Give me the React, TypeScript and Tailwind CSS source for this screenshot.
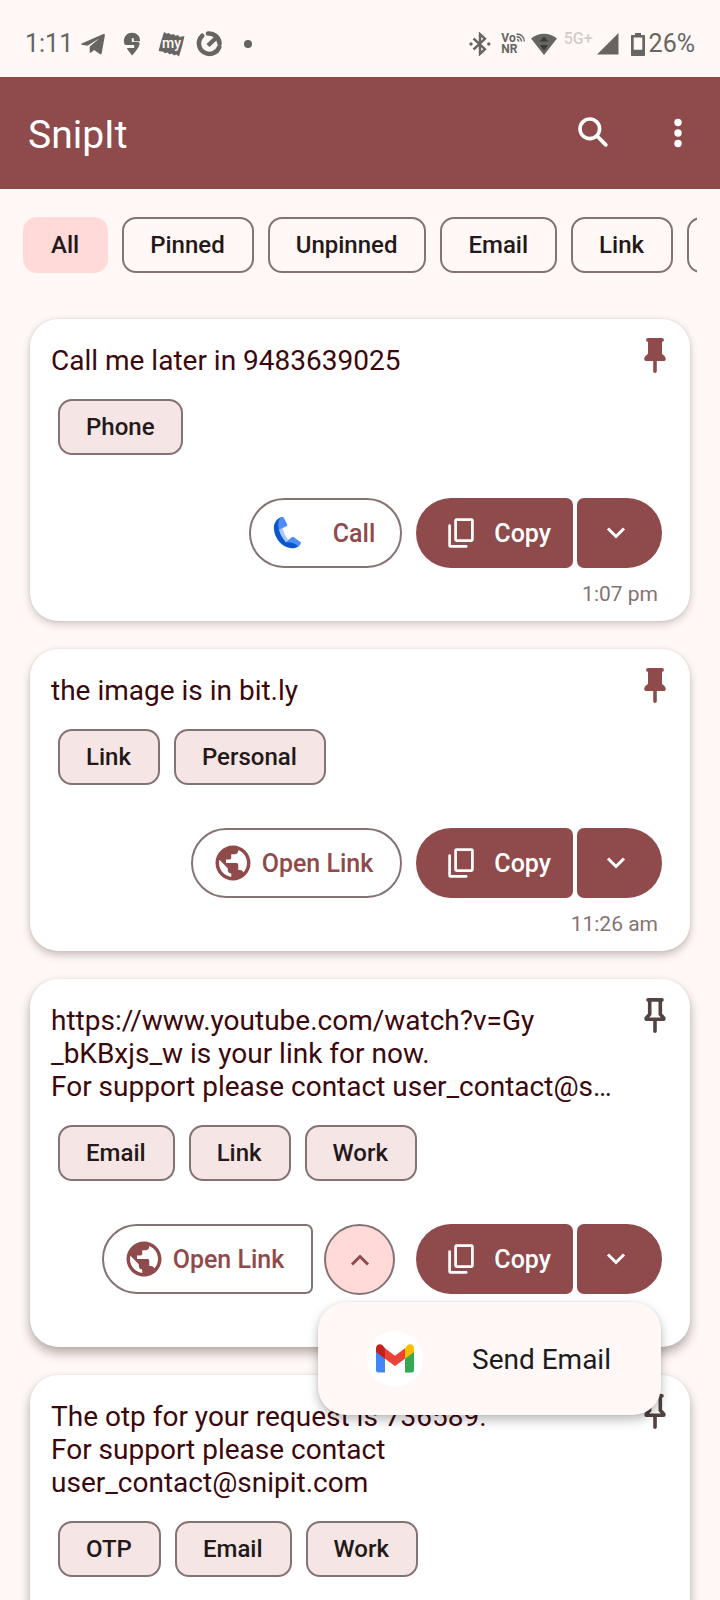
import type { ReactNode } from "react";

type Snippet = {
  text: string[];
  tags: string[];
  pinned: boolean;
  action?: "call" | "link" | "link-menu";
  time?: string;
  shadow: string;
};

const filters = ["All", "Pinned", "Unpinned", "Email", "Link"];

const snippets: Snippet[] = [
  {
    text: ["Call me later in 9483639025"],
    tags: ["Phone"],
    pinned: true,
    action: "call",
    time: "1:07 pm",
    shadow: "shadow-[0_3px_8px_rgba(60,40,35,0.24),0_0_3px_rgba(60,40,35,0.1)]",
  },
  {
    text: ["the image is in bit.ly"],
    tags: ["Link", "Personal"],
    pinned: true,
    action: "link",
    time: "11:26 am",
    shadow: "shadow-[0_4px_9px_rgba(60,40,35,0.28),0_0_3px_rgba(60,40,35,0.08)]",
  },
  {
    text: [
      "https://www.youtube.com/watch?v=Gy",
      "_bKBxjs_w is your link for now.",
      "For support please contact user_contact@s…",
    ],
    tags: ["Email", "Link", "Work"],
    pinned: false,
    action: "link-menu",
    shadow: "shadow-[0_6px_11px_rgba(50,35,30,0.36),0_0_3px_rgba(60,40,35,0.06)]",
  },
  {
    text: [
      "The otp for your request is 736589.",
      "For support please contact",
      "user_contact@snipit.com",
    ],
    tags: ["OTP", "Email", "Work"],
    pinned: false,
    shadow: "shadow-[0_6px_11px_rgba(50,35,30,0.36),0_0_3px_rgba(60,40,35,0.06)]",
  },
];

function StatusBar() {
  return (
    <div className="flex h-[77px] shrink-0 items-center justify-between pt-[11px] pr-[25px] pl-[25px] text-[25px] leading-7 text-[#676562]">
      <div className="flex items-center">
        <span>1:11</span>
        <svg className="ml-2 h-6 w-6" viewBox="0 0 24 24" fill="currentColor" aria-hidden="true">
          <path d="M.6 11.6 22.4 2.1c.9-.4 1.7.3 1.5 1.2l-3.2 18c-.2 1.1-1 1.4-1.9.8l-5.700-4.1-2.900 2.400c-.8.6-1.5.3-1.5-.7v-5.200l9.700-8.300L6.500 13.800.7 12.700c-.7-.2-.7-.8-.1-1.1Z" />
        </svg>
        <svg className="ml-[18px] h-6 w-[18px]" viewBox="0 0 18 24" aria-hidden="true">
          <path
            fill="currentColor"
            d="M9 .8c4.600 0 8 3.200 8 7.700v.8h-6.200V6.300H8.800v3.600h6c1.600 0 2.100 1 1.700 2.600-1 3.900-4.200 7.400-7.400 10.900-2-2.400-3.900-4.700-5.300-7.300h7.400v-3.000H3C1.500 12.900.9 11 .9 9 .9 4.200 4.500.8 9 .8Z"
          />
        </svg>
        <svg className="ml-[17px] h-[26px] w-[27px]" viewBox="0 0 27 26" aria-hidden="true">
          <path
            fill="currentColor"
            d="M6 1l3 1.800 2-.9 2 1.900 2.500-.8 2 1.800 2.400-.7 1.900 1.800L26.500 5 24 15.500l-3 10-2.700-1.900-2.300.9-2-1.900-2.400.8-2-1.800-2.600.7-1.800-1.600L.6 20 3 10.500Z"
          />
          <text x="4" y="17" fontSize="14" fontWeight="500" fill="#fff8f6" fontFamily="Roboto, sans-serif">
            my
          </text>
        </svg>
        <svg className="ml-[10px] h-[28px] w-[28px]" viewBox="0 0 28 28" fill="none" stroke="currentColor" aria-hidden="true">
          <path d="M7.200 5.800A10.500 10.500 0 1 0 24.300 17" strokeWidth="4.600" strokeLinecap="round" />
          <path d="M13 3.500A10.500 10.500 0 0 1 24.500 13.500" strokeWidth="4.600" strokeLinecap="round" />
          <path d="M13 15.500 21 8" strokeWidth="4.400" />
        </svg>
        <span className="ml-[21px] size-2 rounded-full bg-current" />
      </div>
      <div className="flex items-center">
        <svg className="h-6 w-[22px]" viewBox="0 0 22 24" fill="none" stroke="currentColor" strokeWidth="2.400" aria-hidden="true">
          <path d="M4.500 6.500 16 17.200l-5 4.600V2.200l5 4.600L4.500 17.500" />
          <circle cx="2" cy="12" r="1.700" fill="currentColor" stroke="none" />
          <circle cx="19.800" cy="12" r="1.700" fill="currentColor" stroke="none" />
        </svg>
        <div className="ml-[10px] flex flex-col text-[12px] leading-[11px] font-bold">
          <span className="flex">
            Vo
            <svg className="h-[9px] w-[9px]" viewBox="0 0 9 9" fill="none" stroke="currentColor" strokeWidth="1.400" aria-hidden="true">
              <path d="M.5 1C5 1 8.300 4 8.300 8.500M.5 3.800c2.800 0 5 1.900 5 4.700M1 6.500c1 .2 1.700.9 1.800 2" />
            </svg>
          </span>
          <span>NR</span>
        </div>
        <svg className="ml-[6px] h-[23px] w-[26px]" viewBox="0 0 26 23" aria-hidden="true">
          <path fill="currentColor" d="M0 5.500C7.500-1 18.500-1 26 5.500L13 22Z" />
          <path fill="#3d3b39" d="M13 3.500 17.200 8.500H8.800ZM13 17.500 8.800 12h8.400Z" />
        </svg>
        <span className="ml-[7px] pb-[10px] text-[16px] leading-4 font-medium text-[#d3cdca]">5G+</span>
        <svg className="ml-[4px] h-[22px] w-[22px]" viewBox="0 0 22 22" fill="currentColor" aria-hidden="true">
          <path d="M21.500 0v21.500H0Z" />
        </svg>
        <svg className="mr-1 ml-3 h-6 w-[14px]" viewBox="0 0 14 24" aria-hidden="true">
          <path
            fill="currentColor"
            fillRule="evenodd"
            d="M4 1h6v2h3c.6 0 1 .4 1 1v19c0 .6-.4 1-1 1H1c-.6 0-1-.4-1-1V4c0-.6.4-1 1-1h3ZM2.700 5.500v12.300h8.600V5.500Z"
          />
        </svg>
        <span>26%</span>
      </div>
    </div>
  );
}

function PinIcon({ filled }: { filled: boolean }) {
  return (
    <svg className="h-9 w-6" viewBox="0 0 24 36" aria-hidden="true">
      {filled ? (
        <path
          fill="#8f4a4b"
          d="M5 0h14a1.900 1.900 0 0 1 0 3.800V15.700c1 1.400 3.700 2.400 3.700 5.200 0 1.300-.8 2.100-2 2.100H13.800V33.200a1.800 1.800 0 0 1-3.600 0V23H3.300c-1.200 0-2-.8-2-2.100 0-2.800 2.700-3.800 3.700-5.200V3.800A1.900 1.900 0 0 1 5 0Z"
        />
      ) : (
        <g fill="none" stroke="#524343" strokeWidth="3.600" strokeLinecap="round" strokeLinejoin="round">
          <path d="M5 1.900h14M6.700 2v14.200L3.200 20.200V21.200h17.600v-1L17.300 16.200V2M12 22v11.200" />
        </g>
      )}
    </svg>
  );
}

function PhoneIcon() {
  return (
    <svg className="h-8 w-7" viewBox="0 0 28 32" aria-hidden="true">
      <path fill="#0b57d0" d="M7.500.3C3 2.500.7 7 .9 11.500 1.200 21 9 30.500 18.500 31.200c2.500.2 5-.5 7-2L20 22l-7 3L6 12.500 9 5Z" />
      <path fill="#a8c7fa" d="M6 12.500 9.500 11c1 4.500 3 8.700 6 12L13 25.200C9.500 21.500 7 17.300 6 12.500Z" />
      <path fill="#4c8df6" d="M7.300.4C9.300-.3 10.400.1 11.100 1.300L14 7c.5 1 .3 1.700-.6 2.300L6 12.800C4.500 8.500 5 4 7.300.4Z" />
      <path fill="#4c8df6" d="M13 25.300 18.300 20.400c.9-.8 2-.8 2.900 0L27.200 24.800c.8.6.9 1.500.3 2.400-.5.9-1.300 1.700-2.200 2.300C22 26 17.500 24.800 13 25.300Z" />
    </svg>
  );
}

function GlobeIcon() {
  return (
    <svg className="h-[42px] w-[42px]" viewBox="0 0 24 24" fill="#8f4a4b" aria-hidden="true">
      <path d="M12 2C6.480 2 2 6.480 2 12s4.480 10 10 10 10-4.480 10-10S17.520 2 12 2zm-1 17.930c-3.950-.49-7-3.850-7-7.930 0-.62.08-1.210.21-1.790L9 15v1c0 1.100.9 2 2 2v1.930zm6.900-2.540c-.26-.81-1-1.390-1.900-1.390h-1v-3c0-.55-.45-1-1-1H8v-2h2c.55 0 1-.45 1-1V7h2c1.100 0 2-.9 2-2v-.41c2.930 1.190 5 4.060 5 7.410 0 2.080-.8 3.970-2.100 5.390z" />
    </svg>
  );
}

function CopyIcon() {
  return (
    <svg className="h-[30px] w-[26px]" viewBox="0 0 26 30" fill="none" stroke="currentColor" strokeLinecap="round" strokeLinejoin="round" aria-hidden="true">
      <rect x="7.600" y="1.600" width="16.800" height="21" rx="1" strokeWidth="2.700" />
      <path d="M1.600 7.700V27.500c0 .5.300.9.900.9H18.200" strokeWidth="2.700" />
    </svg>
  );
}

function Chevron({ up = false }: { up?: boolean }) {
  return (
    <svg className="h-3 w-5" viewBox="0 0 20 12" fill="none" stroke="currentColor" strokeWidth="3" aria-hidden="true">
      <path d={up ? "M2 10.500 10 2.500 18 10.500" : "M2 1.500 10 9.500 18 1.500"} />
    </svg>
  );
}

function GmailIcon() {
  return (
    <svg className="h-[29px] w-[38px]" viewBox="0 0 38 29" aria-hidden="true">
      <path fill="#4285f4" d="M0 6.500 9 13v15.500H2.500A2.500 2.500 0 0 1 0 26Z" />
      <path fill="#34a853" d="M29 13l9-6.500V26a2.500 2.500 0 0 1-2.500 2.500H29Z" />
      <path fill="#fbbc04" d="M29 4.200 31.500 1.200C34.200-1 38 .8 38 4.300V8l-9 6.700Z" />
      <path fill="#ea4335" d="M9 4.200 19 11.700 29 4.200V14.700L19 22 9 14.700Z" />
      <path fill="#c5221f" d="M0 4.300C0 .8 3.800-1 6.500 1.200L9 4.200V14.700L0 8Z" />
    </svg>
  );
}

function Tag({ children }: { children: ReactNode }) {
  return (
    <li className="flex h-14 items-center rounded-[14px] border-2 border-[#857373] bg-[#f5e6e5] pr-[27px] pl-[26px] text-[24px] leading-7 font-medium text-[#231919]">
      {children}
    </li>
  );
}

function OpenLink({ split = false }: { split?: boolean }) {
  return (
    <a
      href="#open-link"
      className={
        "flex h-[70px] items-center gap-2 border-2 border-[#857373] pr-[27px] pl-[19px] text-[25px] font-medium text-[#8f4a4b] " +
        (split ? "rounded-l-[35px] rounded-r-[7px]" : "rounded-[35px]")
      }
    >
      <GlobeIcon />
      <span className="pt-[2px]">Open Link</span>
    </a>
  );
}

function Actions({ kind }: { kind: "call" | "link" | "link-menu" }) {
  return (
    <div className="relative mt-[43px] mr-[7px] flex justify-end">
      {kind === "call" && (
        <a
          href="#call"
          className="flex h-[70px] items-center gap-8 rounded-[35px] border-2 border-[#857373] pr-[25px] pl-[22px] text-[25px] font-medium text-[#8f4a4b]"
        >
          <PhoneIcon />
          <span className="pt-[2px]">Call</span>
        </a>
      )}
      {kind === "link" && <OpenLink />}
      {kind === "link-menu" && (
        <>
          <OpenLink split />
          <button
            type="button"
            aria-label="Fewer actions"
            aria-expanded="true"
            className="mr-[7px] ml-[11px] flex size-[71px] items-center justify-center rounded-full border-2 border-[#857373] bg-[#ffdad9] text-[#8f4a4b]"
          >
            <Chevron up />
          </button>
        </>
      )}
      <button
        type="button"
        className="ml-[14px] flex h-[70px] items-center gap-5 rounded-l-[35px] rounded-r-[7px] bg-[#8f4a4b] pr-[22px] pl-8 text-[25px] font-medium text-white"
      >
        <CopyIcon />
        <span className="pt-[2px]">Copy</span>
      </button>
      <button
        type="button"
        aria-label="Copy options"
        className="ml-1 flex h-[70px] w-[85px] items-center justify-center rounded-l-[7px] rounded-r-[35px] bg-[#8f4a4b] pr-[7px] text-white"
      >
        <Chevron />
      </button>
      {kind === "link-menu" && (
        <div
          role="menu"
          className="absolute top-full right-px z-10 mt-[7px] rounded-[28px] bg-[#fff8f6] shadow-[0_5px_11px_rgba(0,0,0,0.26),0_0_3px_rgba(0,0,0,0.08)]"
        >
          <button
            type="button"
            role="menuitem"
            className="flex h-[113px] w-[343px] items-center gap-[49px] pl-[49px] text-[28px] leading-8 text-[#1c1b1f]"
          >
            <span className="flex size-14 items-center justify-center rounded-full bg-white">
              <GmailIcon />
            </span>
            <span className="pt-[3px]">Send Email</span>
          </button>
        </div>
      )}
    </div>
  );
}

function SnippetCard({ item }: { item: Snippet }) {
  return (
    <article className={"shrink-0 rounded-[28px] bg-white px-[21px] pt-[25px] " + item.shadow}>
      <div className="flex items-start justify-between">
        <p className="text-[28px] leading-[33px] whitespace-nowrap text-[#3b080d]">
          {item.text.map((line) => (
            <span key={line} className="block">
              {line}
            </span>
          ))}
        </p>
        <button type="button" aria-label={item.pinned ? "Unpin" : "Pin"} className="-mt-[6px] mr-[2px] -mb-2">
          <PinIcon filled={item.pinned} />
        </button>
      </div>
      <ul className="mt-[22px] ml-[7px] flex gap-[14px]">
        {item.tags.map((tag) => (
          <Tag key={tag}>{tag}</Tag>
        ))}
      </ul>
      {item.action ? (
        <>
          <Actions kind={item.action} />
          <div className={item.time ? "h-[53px] pt-[14px] pr-[11px] text-right text-[21px] leading-6 text-[#857373]" : "h-[52px]"}>
            {item.time && <time>{item.time}</time>}
          </div>
        </>
      ) : (
        <div className="h-[165px]" />
      )}
    </article>
  );
}

export default function App() {
  return (
    <div className="flex h-screen flex-col overflow-hidden bg-[#fff8f6] font-[Roboto,sans-serif]">
      <StatusBar />
      <header className="flex h-28 shrink-0 items-center justify-between bg-[#8f4a4b] pr-[34px] pl-7 text-white">
        <h1 className="pt-[3px] text-[39px] leading-[46px]">SnipIt</h1>
        <div className="flex items-center gap-[61px]">
          <button type="button" aria-label="Search">
            <svg className="h-8 w-8" viewBox="0 0 32 32" fill="none" stroke="currentColor" strokeWidth="3.600" aria-hidden="true">
              <circle cx="12.800" cy="11.800" r="9.800" />
              <path d="M20 19 28.800 27.800" strokeWidth="3.800" strokeLinecap="round" />
            </svg>
          </button>
          <button type="button" aria-label="More options">
            <svg className="h-8 w-4" viewBox="0 0 16 32" fill="currentColor" aria-hidden="true">
              <circle cx="8" cy="5.500" r="3.700" />
              <circle cx="8" cy="16" r="3.700" />
              <circle cx="8" cy="26.500" r="3.700" />
            </svg>
          </button>
        </div>
      </header>
      <nav aria-label="Filters" className="mx-[23px] mt-7 flex shrink-0 gap-[14px] overflow-hidden">
        {filters.map((name, i) => (
          <button
            key={name}
            type="button"
            aria-pressed={i === 0}
            className={
              "h-14 shrink-0 rounded-[14px] border-2 pr-[27px] pl-[26px] text-[24px] leading-7 font-medium text-[#231919] " +
              (i === 0 ? "border-[#ffdad9] bg-[#ffdad9]" : "border-[#857373]")
            }
          >
            {name}
          </button>
        ))}
        <button type="button" aria-label="More filters" className="h-14 w-28 shrink-0 rounded-[14px] border-2 border-[#857373]" />
      </nav>
      <main className="mt-4 flex flex-1 flex-col gap-7 overflow-hidden px-[30px] pt-[30px]">
        {snippets.map((item) => (
          <SnippetCard key={item.text[0]} item={item} />
        ))}
      </main>
    </div>
  );
}
